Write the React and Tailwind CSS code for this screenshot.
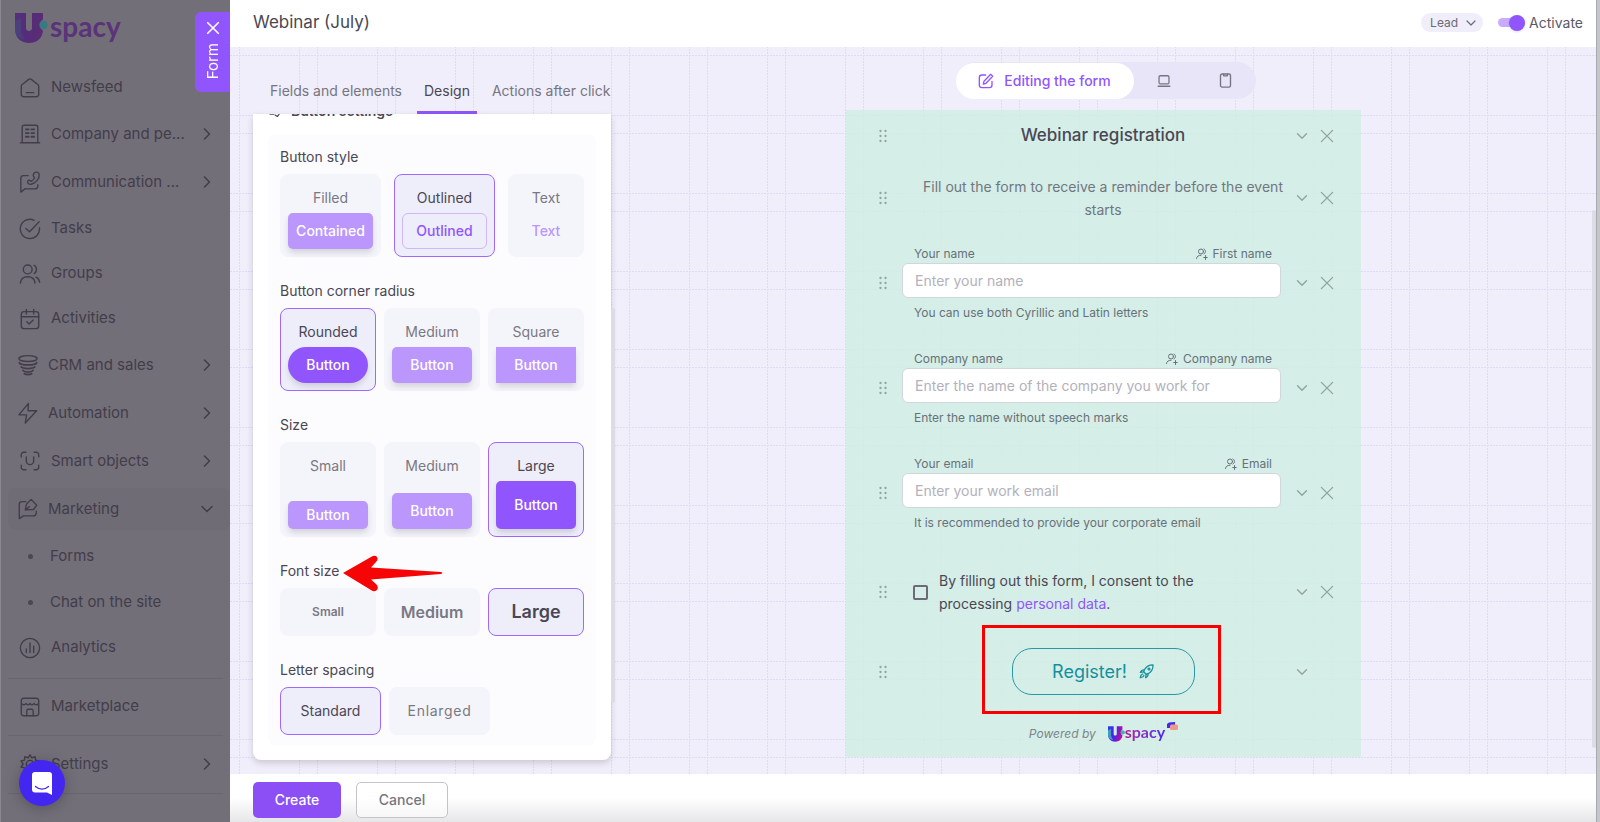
import React from "react";

function Icon({ size = 22, stroke = 1.5, className = "", children }) {
  return (
    <svg
      width={size}
      height={size}
      viewBox="0 0 24 24"
      fill="none"
      stroke="currentColor"
      strokeWidth={stroke}
      strokeLinecap="round"
      strokeLinejoin="round"
      className={"shrink-0 " + className}
      aria-hidden="true"
    >
      {children}
    </svg>
  );
}

const glyphs = {
  home: (
    <>
      <path d="M2.500 10.200c0-.8.4-1.500 1-2L10.600 2.600a2.300 2.300 0 0 1 2.800 0L20.500 8.200c.6.5 1 1.200 1 2V19a2.500 2.500 0 0 1-2.500 2.500H5A2.500 2.500 0 0 1 2.500 19z" />
      <path d="M8 17h8" />
    </>
  ),
  company: (
    <>
      <path d="M1.500 21.500h21M3.500 21.500V4.500a2 2 0 0 1 2-2h13a2 2 0 0 1 2 2v17" />
      <path d="M7.500 7h3M13.500 7h3M7.500 11h3M13.500 11h3M7.500 15h3M13.500 15h3" strokeWidth="2" />
    </>
  ),
  communication: (
    <>
      <path d="M10 5H5a3 3 0 0 0-3 3v15l4.500-3.500H17a3.500 3.500 0 0 0 3.500-3.500v-1" />
      <path d="M17.500 1.500c2-.8 4 .2 4.500 2.200.8 4.800-4 9.800-9 10.800-2 .3-3.500-1-3.600-2.800 0-1.200 1.600-2 2.600-1.300l1.300.9c1.600-.8 3-2.300 3.700-4l-1-1.300c-1-1.500-.2-3.700 1.500-4.500z" />
    </>
  ),
  tasks: (
    <>
      <path d="M22.300 10.500A10.500 10.500 0 1 1 16.500 2.500" />
      <path d="M7.500 11.500l4 3.500L22 4" />
    </>
  ),
  groups: (
    <>
      <circle cx="9.500" cy="7" r="4.800" />
      <path d="M1.500 22c.4-4.500 3.600-7 8-7s7.600 2.500 8 7M16.500 2.500c3.400 1.300 3.400 7.500 0 9M18.500 15.500c2.400.9 3.700 3 4 5.500" />
    </>
  ),
  activities: (
    <>
      <rect x="2.500" y="4" width="19" height="18.500" rx="3" />
      <path d="M2.500 9.500h19M8 1.500v5M16 1.500v5M8.500 15l2.500 2.500 4.500-4.500" />
    </>
  ),
  crm: (
    <>
      <ellipse cx="12" cy="5" rx="10" ry="3.200" />
      <path d="M2.500 9.500c2 3.300 17 3.300 19 0M4.500 14c2 2.600 13 2.600 15 0M6.500 18c2 2.200 9 2.200 11 0M8 21.500c2 1.200 6 1.200 8 0" strokeWidth="1.900" />
    </>
  ),
  automation: <path d="M12.500 1.500L2 14h8.500l-1.500 9L21.500 9.500H12z" />,
  smart: (
    <>
      <path d="M2.500 7.500V5A2.500 2.500 0 0 1 5 2.500h2.500M16.500 2.500H19A2.500 2.500 0 0 1 21.500 5v2.500M21.500 16.500V19a2.500 2.500 0 0 1-2.500 2.500h-2.500M7.500 21.500H5A2.500 2.500 0 0 1 2.500 19v-2.500" />
      <path d="M8 7.500V12a4 4 0 0 0 8 0V7.500" />
    </>
  ),
  marketing: (
    <>
      <path d="M9.500 4H5.500a3 3 0 0 0-3 3v15.500L7 19.500h10.500A3.500 3.500 0 0 0 21 16v-1.500" />
      <path d="M15.500 1.500l6 6.500-3.500 4.500-9 .5 1.500-6.500zM9 13l4.500-3.500" />
    </>
  ),
  analytics: (
    <>
      <circle cx="12" cy="12" r="10.500" />
      <path d="M8 17v-4M12 17V6.500M16 17v-7" />
    </>
  ),
  market: (
    <>
      <path d="M2.500 10V5A2.500 2.500 0 0 1 5 2.500h14A2.500 2.500 0 0 1 21.500 5v14a2.500 2.500 0 0 1-2.500 2.500H5A2.500 2.500 0 0 1 2.500 19V8c1 2 4.500 2 5 0 1 2.200 3.800 2.200 4.500 0 .7 2.200 3.500 2.200 4.500 0 .5 2 4 2 5 0" />
      <path d="M8.500 21.500V16a1.500 1.500 0 0 1 1.500-1.500h4a1.500 1.500 0 0 1 1.500 1.500v5.500" />
    </>
  ),
  settings: (
    <>
      <circle cx="12" cy="12" r="4" />
      <path d="M12 2l2 3.200 3.700-1.200.3 3.800 3.800.9L19.500 12l2.300 3.300-3.800.9-.3 3.800-3.700-1.200L12 22l-2-3.200L6.300 20l-.3-3.800-3.800-.9L4.500 12 2.200 8.700 6 7.800 6.300 4 10 5.200z" />
    </>
  ),
};

function Chevron({ dir = "down", size = 20, className = "" }) {
  return (
    <Icon size={size} stroke={1.8} className={className}>
      {dir === "down" ? <path d="M6 9l6 6 6-6" /> : <path d="M9 6l6 6-6 6" />}
    </Icon>
  );
}

function NavRow({ icon, label, arrow, tight, active }) {
  return (
    <li className={"flex pl-[7px] py-[3px] " + (arrow ? "h-12" : "h-[45px]")}>
      <a
        href="#"
        className={
          "flex min-w-0 flex-1 items-center rounded-lg pr-[13px] whitespace-nowrap " +
          (tight ? "gap-[9px] pl-[9px] " : "gap-[10px] pl-[11px] ") +
          (active ? "bg-[#706c76]" : "")
        }
      >
        <Icon>{glyphs[icon]}</Icon>
        <span>{label}</span>
        {arrow && <Chevron dir={arrow} className="ml-auto" />}
      </a>
    </li>
  );
}

function SubRow({ label }) {
  return (
    <li className="flex h-[46px] items-center pl-[27px]">
      <span className="mr-[17px] size-[5px] rounded-full bg-[#4c4753]" />
      <a href="#">{label}</a>
    </li>
  );
}

function LogoMark({ width, height, dim }) {
  return (
    <svg width={width} height={height} viewBox="0 0 33 30" aria-hidden="true">
      <defs>
        <linearGradient id={dim ? "u-dim" : "u-lit"} x1="0" y1="0" x2="1" y2="0.200">
          <stop offset="0" stopColor={dim ? "#54307c" : "#2c3ee8"} />
          <stop offset="0.500" stopColor={dim ? "#552c7a" : "#4a22f0"} />
          <stop offset="1" stopColor={dim ? "#5a2d74" : "#b5109c"} />
        </linearGradient>
      </defs>
      <path
        d="M0 0h11v15c0 4 6 4 6 0V0h11v6.500a6.500 6.500 0 0 0 0 11C27.500 25.500 21.500 30 14 30S0 25 0 16z"
        fill={dim ? "url(#u-dim)" : "url(#u-lit)"}
      />
      <path d="M0 8l6-3v14l4 8C4 25.500 0 22 0 16z" fill={dim ? "#3b5f80" : "#3fa9b5"} opacity={dim ? 0.35 : 0.9} />
      <circle cx="28.500" cy="12" r="4.200" fill={dim ? "#357b80" : "#3fb0b5"} />
    </svg>
  );
}

function Sidebar() {
  return (
    <aside className="flex w-[230px] shrink-0 flex-col border-l border-[#8a8790] bg-[#726f79] text-[15px] text-[#423d49]">
      <a href="#" className="flex h-[65px] items-start pt-[13px] pl-[14px]" aria-label="Uspacy">
        <LogoMark width={33} height={30} dim />
        <span className="ml-[2px] font-['Lato'] text-[28px] leading-[26px] font-bold text-[#5a3378]">spacy</span>
      </a>
      <nav aria-label="Main">
        <ul>
          <NavRow icon="home" label="Newsfeed" />
          <NavRow icon="company" label="Company and pe..." arrow="right" />
          <NavRow icon="communication" label="Communication ..." arrow="right" />
          <NavRow icon="tasks" label="Tasks" />
          <NavRow icon="groups" label="Groups" />
          <NavRow icon="activities" label="Activities" />
          <NavRow icon="crm" label="CRM and sales" arrow="right" tight />
          <NavRow icon="automation" label="Automation" arrow="right" tight />
          <NavRow icon="smart" label="Smart objects" arrow="right" />
          <NavRow icon="marketing" label="Marketing" arrow="down" tight active />
          <SubRow label="Forms" />
          <SubRow label="Chat on the site" />
          <NavRow icon="analytics" label="Analytics" />
        </ul>
        <hr className="mx-[7px] mt-2 mb-[5px] border-[#6a6670]" />
        <ul>
          <NavRow icon="market" label="Marketplace" />
        </ul>
        <hr className="mx-[7px] mt-[6px] mb-1 border-[#6a6670]" />
        <ul>
          <NavRow icon="settings" label="Settings" arrow="right" />
        </ul>
        <hr className="mx-[7px] mt-[5px] border-[#6a6670]" />
      </nav>
    </aside>
  );
}

function Section({ title, children }) {
  return (
    <fieldset>
      <legend className="mb-[7px] text-sm leading-5 text-[#4a4753]">{title}</legend>
      {children}
    </fieldset>
  );
}

function Card({ label, selected, className = "", children }) {
  return (
    <button
      type="button"
      aria-pressed={!!selected}
      className={
        "flex flex-col rounded-lg border px-[7px] text-sm leading-5 " +
        (selected ? "border-[#9e69fd] bg-[#eeedfa] text-[#4a4753] " : "border-[#f4f5fa] bg-[#f4f5fa] text-[#7a7883] ") +
        className
      }
    >
      {label && <span className="w-full pt-[13px] pb-[5px] text-center">{label}</span>}
      {children}
    </button>
  );
}

const swatch = "flex w-full items-center justify-center font-medium";

function Swatch({ text, solid, className }) {
  return (
    <span
      className={
        swatch +
        " text-white shadow-[0_4px_6px_-1px_rgba(58,53,65,0.2)] " +
        (solid ? "bg-[#9155fd] " : "bg-[#ba96fd] ") +
        className
      }
    >
      {text}
    </span>
  );
}

function RedArrow() {
  return (
    <svg
      width="102"
      height="38"
      viewBox="0 0 102 38"
      className="absolute -top-[7px] left-[62px]"
      aria-hidden="true"
    >
      <path
        d="M1 19L29 3q4-2.500 6 0 1.500 3-1 5l-5 5.500L99 18q2.500 1 0 2L29 25.500l5 4.500q3 3 1 6-3 2.500-6 0z"
        fill="#f50505"
      />
    </svg>
  );
}

function DesignPanel() {
  return (
    <div className="w-[362px] shrink-0">
      <div role="tablist" className="flex h-[67px] items-end gap-[7px] pl-[9px] text-sm whitespace-nowrap text-[#77757f]">
        <button role="tab" type="button" className="h-11 border-b-2 border-transparent px-2">
          Fields and elements
        </button>
        <button role="tab" type="button" aria-selected="true" className="h-11 border-b-[3px] border-[#9155fd] px-[7px] text-[#4a4753]">
          Design
        </button>
        <button role="tab" type="button" className="h-11 border-b-2 border-transparent px-2">
          Actions after click
        </button>
      </div>
      <div className="flex">
        <div className="flex-1 overflow-hidden rounded-b-lg bg-white shadow-[0_3px_6px_rgba(58,53,65,0.2)]">
          <h2 className="-mt-[13px] flex h-5 items-center gap-[10px] pl-4 text-sm font-semibold text-[#4a4753]">
            <Icon size={12} stroke={2.5}>
              <path d="M2 4v14h7M20 4v6M12 20l5 3 6-9" />
            </Icon>
            Button settings
          </h2>
          <div className="mx-[15px] mt-[13px] mb-[14px] flex flex-col gap-6 rounded-lg bg-[#fcfcfe] px-3 pt-[13px] pb-[11px]">
            <Section title="Button style">
              <div className="grid grid-cols-[101fr_101fr_76fr] gap-[13px]">
                <Card label="Filled">
                  <Swatch text="Contained" className="mb-[7px] h-9 rounded-[5px]" />
                </Card>
                <Card label="Outlined" selected>
                  <span className={swatch + " h-9 rounded-md border border-[#d0b6fb] text-[#9155fd]"}>Outlined</span>
                </Card>
                <Card label="Text">
                  <span className={swatch + " h-9 text-[#ba96fd]"}>Text</span>
                </Card>
              </div>
            </Section>
            <Section title="Button corner radius">
              <div className="grid grid-cols-3 gap-2">
                <Card label="Rounded" selected>
                  <Swatch text="Button" solid className="mb-[7px] h-9 rounded-full" />
                </Card>
                <Card label="Medium">
                  <Swatch text="Button" className="h-9 rounded-[5px]" />
                </Card>
                <Card label="Square">
                  <Swatch text="Button" className="h-9" />
                </Card>
              </div>
            </Section>
            <Section title="Size">
              <div className="grid grid-cols-3 gap-2">
                <Card label="Small">
                  <Swatch text="Button" className="mt-auto mb-[7px] h-7 rounded-[5px]" />
                </Card>
                <Card label="Medium">
                  <Swatch text="Button" className="mt-auto mb-[7px] h-9 rounded-[5px]" />
                </Card>
                <Card label="Large" selected>
                  <Swatch text="Button" solid className="mb-[7px] h-12 rounded-[5px]" />
                </Card>
              </div>
            </Section>
            <div className="relative">
              <Section title="Font size">
                <div className="grid grid-cols-3 gap-2">
                  <Card className="h-12 items-center justify-center font-semibold">
                    <span className="text-xs">Small</span>
                  </Card>
                  <Card className="h-12 items-center justify-center font-semibold">
                    <span className="text-base">Medium</span>
                  </Card>
                  <Card selected className="h-12 items-center justify-center font-semibold">
                    <span className="text-lg">Large</span>
                  </Card>
                </div>
              </Section>
              <RedArrow />
            </div>
            <Section title="Letter spacing">
              <div className="flex gap-2">
                <Card selected className="h-12 w-[101px] items-center justify-center">
                  Standard
                </Card>
                <Card className="h-12 w-[101px] items-center justify-center tracking-wider">Enlarged</Card>
              </div>
            </Section>
          </div>
        </div>
        <div className="mt-[194px] mb-[57px] w-1 rounded-full bg-[#dddbe4]" />
      </div>
    </div>
  );
}

function Handle() {
  return (
    <svg width="14" height="14" viewBox="0 0 14 14" fill="#93a39f" className="shrink-0" aria-hidden="true">
      {[2, 7, 12].map((y) => (
        <React.Fragment key={y}>
          <circle cx="4.500" cy={y} r="1.150" />
          <circle cx="9.500" cy={y} r="1.150" />
        </React.Fragment>
      ))}
    </svg>
  );
}

function PreviewRow({ className = "", noRemove, children }) {
  return (
    <div className={"flex items-center gap-3 pl-[30px] " + className}>
      <Handle />
      <div className="min-w-0 flex-1">{children}</div>
      <div className="flex w-[68px] items-center gap-[7px] text-[#93a39f]">
        <button type="button" aria-label="Expand">
          <Chevron size={18} />
        </button>
        {!noRemove && (
          <button type="button" aria-label="Remove">
            <Icon size={18} stroke={1.8}>
              <path d="M4.500 4.500l15 15M19.500 4.500l-15 15" />
            </Icon>
          </button>
        )}
      </div>
    </div>
  );
}

function Field({ id, label, source, placeholder, hint }) {
  return (
    <PreviewRow>
      <div className="flex h-[18px] items-center justify-between pr-[9px] pl-3 text-xs text-[#68717a]">
        <label htmlFor={id}>{label}</label>
        <span className="flex items-center gap-[5px]">
          <Icon size={12} stroke={2}>
            <circle cx="10" cy="7" r="5" />
            <path d="M1 21c.5-4.500 4-6.500 9-6.500M16 2c4 1.500 4 8 0 10M19 15v8M15.500 19h7" />
          </Icon>
          {source}
        </span>
      </div>
      <input
        id={id}
        placeholder={placeholder}
        className="block h-[35px] w-full rounded-md border border-[#d2d6dc] bg-white px-3 text-sm text-[#4a4753] outline-none placeholder:text-[#b3b1bb]"
      />
      <p className="mt-[6px] text-xs leading-[17px] text-[#68717a]">
        <span className="pl-3">{hint}</span>
      </p>
    </PreviewRow>
  );
}

function Preview() {
  return (
    <div className="flex min-w-0 flex-1 flex-col items-center pt-[15px]">
      <div className="flex h-[37px] items-center rounded-full bg-[#e8e5f8] text-[#77757f]">
        <button
          type="button"
          className="flex h-9 w-[178px] items-center justify-center gap-[10px] rounded-full bg-white text-sm font-medium text-[#9155fd]"
        >
          <Icon size={16} stroke={2}>
            <path d="M11.500 3H6a4 4 0 0 0-4 4v11a4 4 0 0 0 4 4h11a4 4 0 0 0 4-4v-5.500" />
            <path d="M19 2l3 3L12 15.500l-4 1 1-4z" />
          </Icon>
          Editing the form
        </button>
        <button type="button" aria-label="Desktop view" className="flex w-[61px] justify-center">
          <Icon size={14} stroke={2.2}>
            <rect x="3.500" y="3" width="17" height="14" rx="2" />
            <path d="M2 21h20" />
          </Icon>
        </button>
        <button type="button" aria-label="Mobile view" className="flex w-[61px] justify-center">
          <Icon size={15} stroke={2.2}>
            <rect x="4" y="1.500" width="16" height="21" rx="2.500" />
            <path d="M9 2v2.500h6V2" />
          </Icon>
        </button>
      </div>
      <form className="mt-[11px] mr-1 mb-4 w-[515px] bg-[#d0ede3]/85" onSubmit={(e) => e.preventDefault()}>
        <PreviewRow className="h-[52px]">
          <h2 className="pl-[23px] text-center text-[17px] font-medium text-[#4a4753]">Webinar registration</h2>
        </PreviewRow>
        <PreviewRow className="mt-[13px] mb-6">
          <p className="-mr-1 pl-[19px] text-center text-sm leading-[23px] text-[#717680]">
            Fill out the form to receive a reminder before the event starts
          </p>
        </PreviewRow>
        <div className="flex flex-col gap-[29px]">
          <Field
            id="name"
            label="Your name"
            source="First name"
            placeholder="Enter your name"
            hint="You can use both Cyrillic and Latin letters"
          />
          <Field
            id="company"
            label="Company name"
            source="Company name"
            placeholder="Enter the name of the company you work for"
            hint="Enter the name without speech marks"
          />
          <Field
            id="email"
            label="Your email"
            source="Email"
            placeholder="Enter your work email"
            hint="It is recommended to provide your corporate email"
          />
        </div>
        <PreviewRow className="mt-[38px]">
          <div className="flex items-center gap-[11px] pl-[11px] text-sm leading-[23px] text-[#4a4753]">
            <input
              id="consent"
              type="checkbox"
              className="size-[15px] shrink-0 appearance-none rounded-xs border-2 border-[#6c6a74]"
            />
            <label htmlFor="consent" className="w-[260px]">
              By filling out this form, I consent to the processing{" "}
              <a href="#" className="text-[#9155fd]">
                personal data
              </a>
              .
            </label>
          </div>
        </PreviewRow>
        <PreviewRow className="mt-[33px]" noRemove>
          <div className="flex justify-center pl-[23px]">
            <div className="relative">
              <button
                type="submit"
                className="flex h-[47px] w-[183px] items-center justify-center gap-3 rounded-[20px] border border-[#2799a5] text-lg text-[#14909d]"
              >
                Register!
                <Icon size={15} stroke={2}>
                  <path d="M22.500 1.500C16 1.500 11.500 4 8.500 9.500l-1 3 4 4 3-1c5.500-3 8-7.500 8-14z" />
                  <path d="M8.500 9.500c-3-.5-5 .5-6.500 4l5.500-1M14.500 15.500c.5 3-.5 5-4 6.500l1-5.500M6 16c-2.500.5-3.500 2.500-4 6 3.500-.5 5.500-1.500 6-4" />
                  <circle cx="16" cy="8" r="1.500" />
                </Icon>
              </button>
              <span className="pointer-events-none absolute -top-[23px] -right-[26px] -bottom-[19px] -left-[30px] border-[3px] border-[#f80000]" />
            </div>
          </div>
        </PreviewRow>
        <div className="flex h-[62px] items-center justify-center pt-4">
          <span className="text-xs text-[#7d858c] italic">Powered by</span>
          <a href="#" className="ml-3 flex items-center" aria-label="Uspacy">
            <LogoMark width={17} height={16} />
            <span className="bg-linear-to-r from-[#b5109c] to-[#4a22f0] bg-clip-text pb-1 font-['Lato'] text-base leading-4 font-bold text-transparent">
              spacy
            </span>
            <svg width="11" height="9" viewBox="0 0 11 9" className="mb-4 ml-[2px]" aria-hidden="true">
              <path d="M0 2l2-1.500L8 0v6H0z" fill="#3c2bf0" />
              <rect x="3" y="2.500" width="8" height="5.500" rx="1.500" fill="#f09a85" />
            </svg>
          </a>
        </div>
      </form>
    </div>
  );
}

function GridBackdrop() {
  return (
    <svg className="absolute inset-0 -z-10 size-full" aria-hidden="true">
      <defs>
        <pattern id="grid" x="9" y="8" width="78" height="78" patternUnits="userSpaceOnUse">
          <path d="M0.500 0v78M60.500 0v78M0 0.500h78M0 60.500h78" stroke="#dfdbf6" strokeDasharray="2 1" />
        </pattern>
      </defs>
      <rect width="100%" height="100%" fill="url(#grid)" />
    </svg>
  );
}

export default function App() {
  return (
    <div className="relative flex min-h-screen overflow-hidden bg-[#c6c6c9] font-['Inter',sans-serif]">
      <Sidebar />
      <button
        type="button"
        className="absolute top-3 left-[195px] flex h-20 w-[35px] flex-col items-center gap-[6px] rounded-l-md bg-[#9155fd] pt-[7px] text-white"
      >
        <Icon size={18} stroke={2.2}>
          <path d="M5 5l14 14M19 5L5 19" />
        </Icon>
        <span className="rotate-180 text-[15px] leading-5 [writing-mode:vertical-rl]">Form</span>
      </button>

      <main className="flex min-w-0 flex-1 flex-col border-r border-[#a5a9b1] bg-white">
        <header className="flex h-[47px] items-center pr-[13px] pb-[2px] pl-[23px]">
          <h1 className="text-[17px] text-[#4a4753]">Webinar (July)</h1>
          <div className="relative ml-auto">
            <select
              aria-label="Target entity"
              className="block h-[19px] w-[62px] appearance-none rounded-full bg-[#f0eefa] pl-[9px] text-xs text-[#6c6a74]"
            >
              <option>Lead</option>
            </select>
            <Chevron size={16} className="pointer-events-none absolute top-[2px] right-1 text-[#6c6a74]" />
          </div>
          <label className="ml-[15px] flex items-center gap-1 text-sm text-[#5c5964]">
            <input
              type="checkbox"
              defaultChecked
              className="flex h-[9px] w-[27px] appearance-none items-center justify-end rounded-full bg-[#c8aafe] before:size-4 before:shrink-0 before:rounded-full before:bg-[#9155fd] before:shadow-sm"
            />
            Activate
          </label>
        </header>

        <div className="relative isolate flex flex-1 bg-[#f0eefa] pl-[23px]">
          <GridBackdrop />
          <DesignPanel />
          <Preview />
          <div className="mt-[163px] mb-[26px] -ml-[4px] w-1 rounded-full bg-[#dddbe4]" />
        </div>

        <footer className="flex h-12 items-start gap-[15px] bg-linear-to-b from-white from-50% to-[#e6e6e8] pt-2 pl-[23px]">
          <button type="button" className="h-9 w-[88px] rounded-[5px] bg-[#8b4ff5] text-sm font-medium text-white">
            Create
          </button>
          <button type="button" className="h-9 w-[92px] rounded-[5px] border border-[#c4c3ca] bg-white/60 text-sm font-medium text-[#77757f]">
            Cancel
          </button>
        </footer>
      </main>
      <div className="w-[3px] shrink-0" />

      <button
        type="button"
        aria-label="Open chat"
        className="absolute bottom-4 left-[19px] flex size-[46px] items-center justify-center rounded-full bg-[#4326ef] shadow-[0_2px_14px_rgba(0,0,0,0.25)]"
      >
        <svg width="20" height="23" viewBox="0 0 20 23" aria-hidden="true">
          <path d="M3 0h14a3 3 0 0 1 3 3v20l-5-2.500H3a3 3 0 0 1-3-3V3a3 3 0 0 1 3-3z" fill="#fff" />
          <path d="M3.500 14.500c4 3.300 9 3.300 13 0" fill="none" stroke="#4326ef" strokeWidth="1.300" strokeLinecap="round" />
        </svg>
      </button>
    </div>
  );
}
